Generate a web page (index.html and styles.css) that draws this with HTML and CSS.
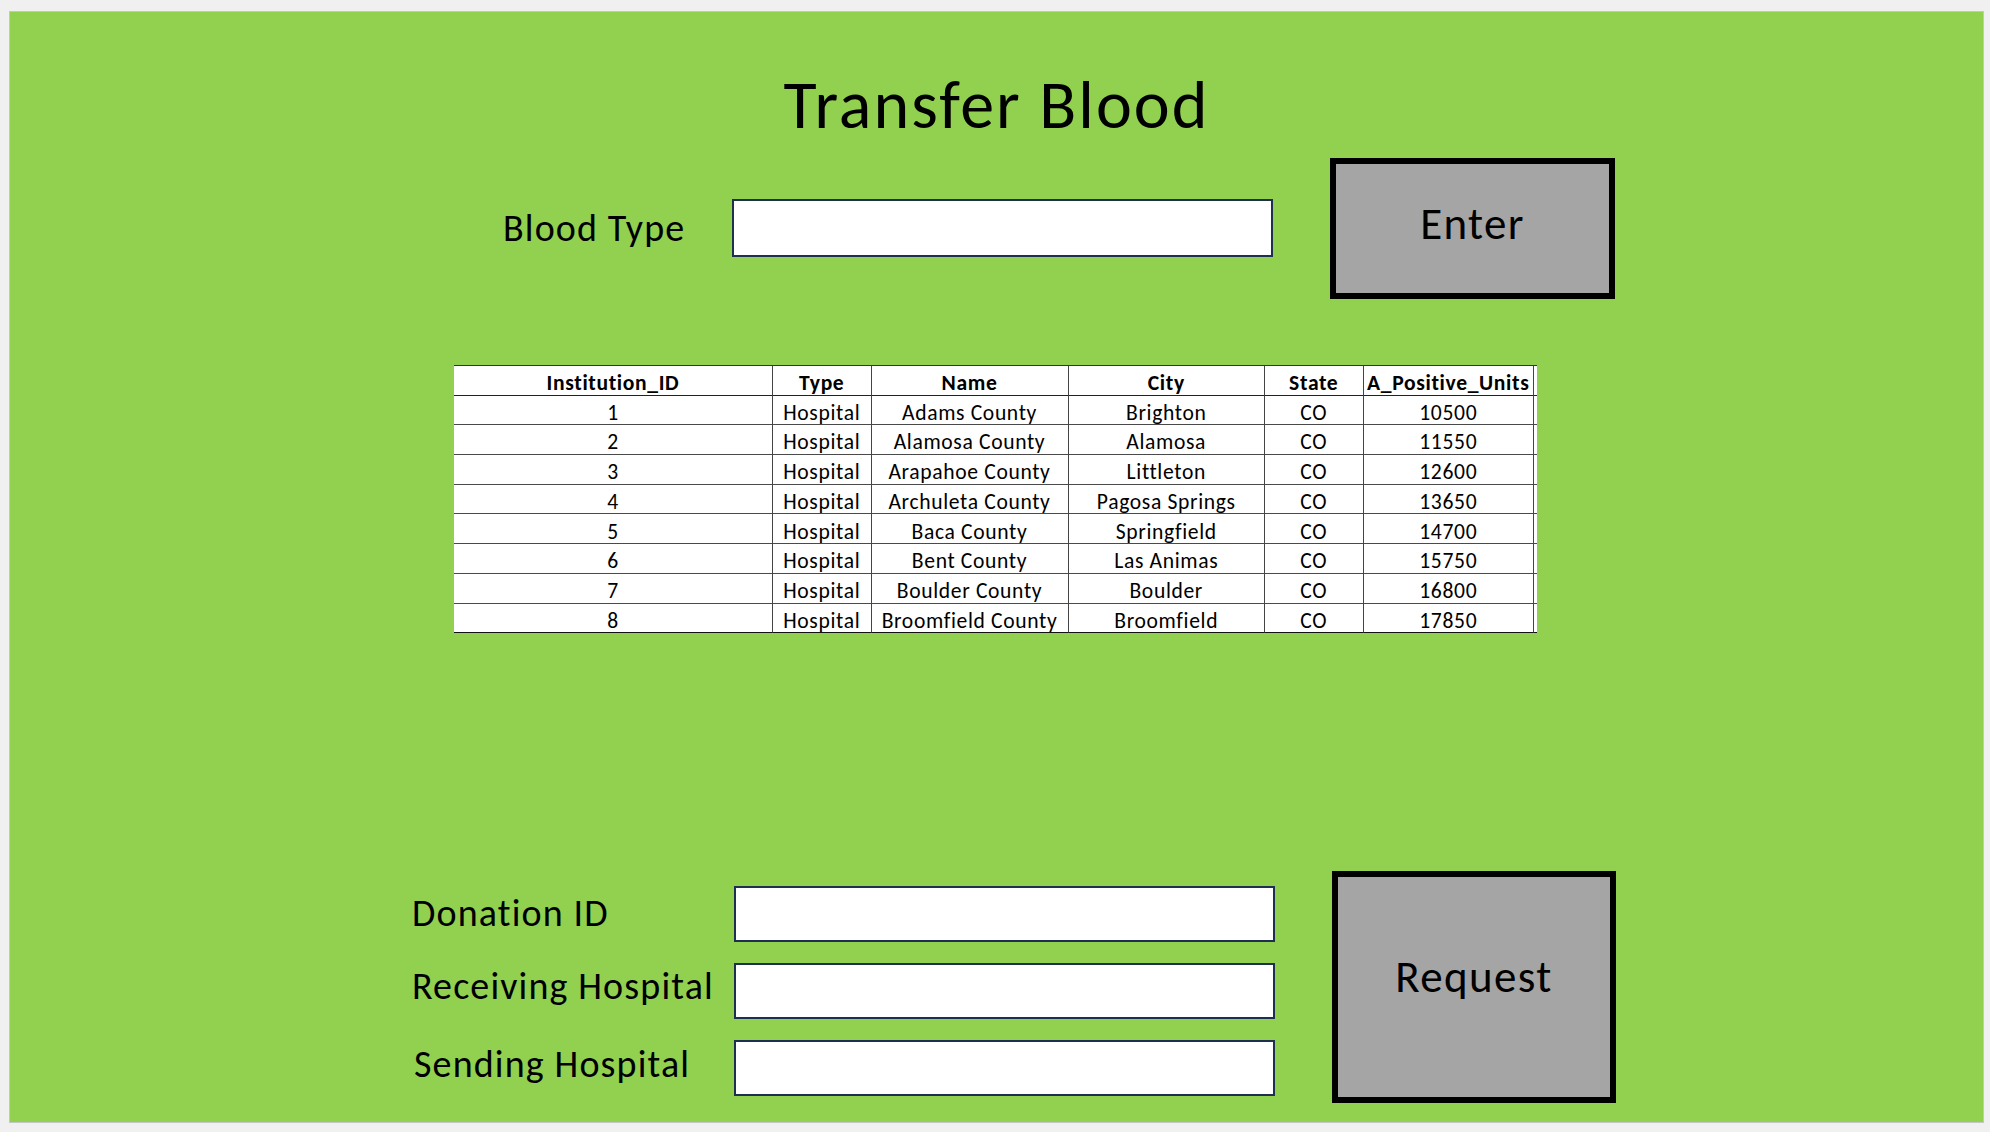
FILE: index.html
```html
<!DOCTYPE html>
<html lang="en">
<head>
<meta charset="utf-8">
<title>Transfer Blood</title>
<link rel="stylesheet" href="styles.css">
</head>
<body>
<div class="slide">
  <h1 class="title">Transfer Blood</h1>

  <div class="lookup">
    <span class="field-label lookup-label">Blood Type</span>
    <div class="textbox lookup-box"></div>
    <div class="btn btn-enter">Enter</div>
  </div>

  <div class="sheet">
    <div class="c h">Institution_ID</div><div class="c h">Type</div><div class="c h">Name</div><div class="c h">City</div><div class="c h">State</div><div class="c h">A_Positive_Units</div><div class="c h"></div>
    <div class="c">1</div><div class="c">Hospital</div><div class="c">Adams County</div><div class="c">Brighton</div><div class="c">CO</div><div class="c">10500</div><div class="c"></div>
    <div class="c">2</div><div class="c">Hospital</div><div class="c">Alamosa County</div><div class="c">Alamosa</div><div class="c">CO</div><div class="c">11550</div><div class="c"></div>
    <div class="c">3</div><div class="c">Hospital</div><div class="c">Arapahoe County</div><div class="c">Littleton</div><div class="c">CO</div><div class="c">12600</div><div class="c"></div>
    <div class="c">4</div><div class="c">Hospital</div><div class="c">Archuleta County</div><div class="c">Pagosa Springs</div><div class="c">CO</div><div class="c">13650</div><div class="c"></div>
    <div class="c">5</div><div class="c">Hospital</div><div class="c">Baca County</div><div class="c">Springfield</div><div class="c">CO</div><div class="c">14700</div><div class="c"></div>
    <div class="c">6</div><div class="c">Hospital</div><div class="c">Bent County</div><div class="c">Las Animas</div><div class="c">CO</div><div class="c">15750</div><div class="c"></div>
    <div class="c">7</div><div class="c">Hospital</div><div class="c">Boulder County</div><div class="c">Boulder</div><div class="c">CO</div><div class="c">16800</div><div class="c"></div>
    <div class="c last">8</div><div class="c last">Hospital</div><div class="c last">Broomfield County</div><div class="c last">Broomfield</div><div class="c last">CO</div><div class="c last">17850</div><div class="c last"></div>
  </div>

  <div class="transfer">
    <div class="transfer-form">
      <span class="field-label lbl-donation">Donation ID</span><div class="textbox"></div>
      <span class="field-label lbl-receiving">Receiving Hospital</span><div class="textbox"></div>
      <span class="field-label lbl-sending">Sending Hospital</span><div class="textbox"></div>
    </div>
    <div class="btn btn-request">Request</div>
  </div>
</div>
</body>
</html>
```

FILE: styles.css
```css
html, body {
  margin: 0;
  padding: 0;
  background: #f0f0f0;
}

body {
  font-family: Carlito, Lato, "Liberation Sans", sans-serif;
  color: #000;
}

.slide {
  box-sizing: border-box;
  margin: 11px 0 0 9px;
  width: 1975px;
  height: 1112px;
  border: 1px solid #c6c6c6;
  background: #92d050;
  overflow: hidden;
}

.title {
  box-sizing: border-box;
  margin: 0;
  height: 146px;
  padding-top: 59px;
  font-size: 68px;
  line-height: 68px;
  letter-spacing: 0.03em;
  font-weight: normal;
  text-align: center;
}

.field-label {
  font-size: 38px;
  line-height: 38px;
  letter-spacing: 0.03em;
  white-space: nowrap;
}

.textbox {
  box-sizing: border-box;
  background: #fff;
  border: 2px solid #1f2f4f;
}

.btn {
  box-sizing: border-box;
  border: 6px solid #000;
  background: #a5a5a5;
  display: flex;
  align-items: center;
  justify-content: center;
  font-size: 45px;
  line-height: 45px;
  letter-spacing: 0.03em;
}

/* top lookup row */
.lookup {
  display: flex;
  align-items: flex-start;
  padding-left: 493px;
  height: 141px;
}

.lookup-label {
  width: 229px;
  margin-top: 51px;
}

.lookup-box {
  width: 541px;
  height: 58px;
  margin-top: 41px;
}

.btn-enter {
  margin-left: 57px;
  width: 285px;
  height: 141px;
  padding-bottom: 10px;
}

/* spreadsheet table */
.sheet {
  margin: 66px 0 0 444px;
  width: 1083px;
  display: grid;
  grid-template-columns: 318px 98.5px 197px 196.5px 98.5px 170.5px 4px;
  grid-auto-rows: 29.7px;
  background: #fff;
  border-top: 1px solid #333;
}

.c {
  box-sizing: border-box;
  display: flex;
  align-items: flex-end;
  justify-content: center;
  overflow: hidden;
  white-space: nowrap;
  padding-bottom: 1px;
  border-bottom: 1px solid #4a4a4a;
  font-size: 21.6px;
  line-height: 21.6px;
  letter-spacing: 0.03em;
}

.c:not(:nth-child(7n+1)) {
  border-left: 1px solid #444;
}

.c.h {
  font-weight: bold;
  border-bottom-color: #222;
}

.c.last {
  border-bottom-color: #111;
}

/* bottom transfer form */
.transfer {
  display: flex;
  align-items: flex-start;
  margin-top: 238px;
  padding-left: 402px;
}

.transfer-form {
  display: grid;
  grid-template-columns: 322px 541px;
  grid-auto-rows: 56px;
  row-gap: 21px;
  align-items: start;
  margin-top: 15px;
}

.transfer-form .textbox {
  height: 56px;
}

.lbl-donation {
  margin-top: 8px;
}

.lbl-receiving {
  margin-top: 4px;
}

.lbl-sending {
  margin-top: 5px;
  padding-left: 2px;
}

.btn-request {
  margin-left: 57px;
  width: 284px;
  height: 232px;
  padding-bottom: 21px;
}
```
